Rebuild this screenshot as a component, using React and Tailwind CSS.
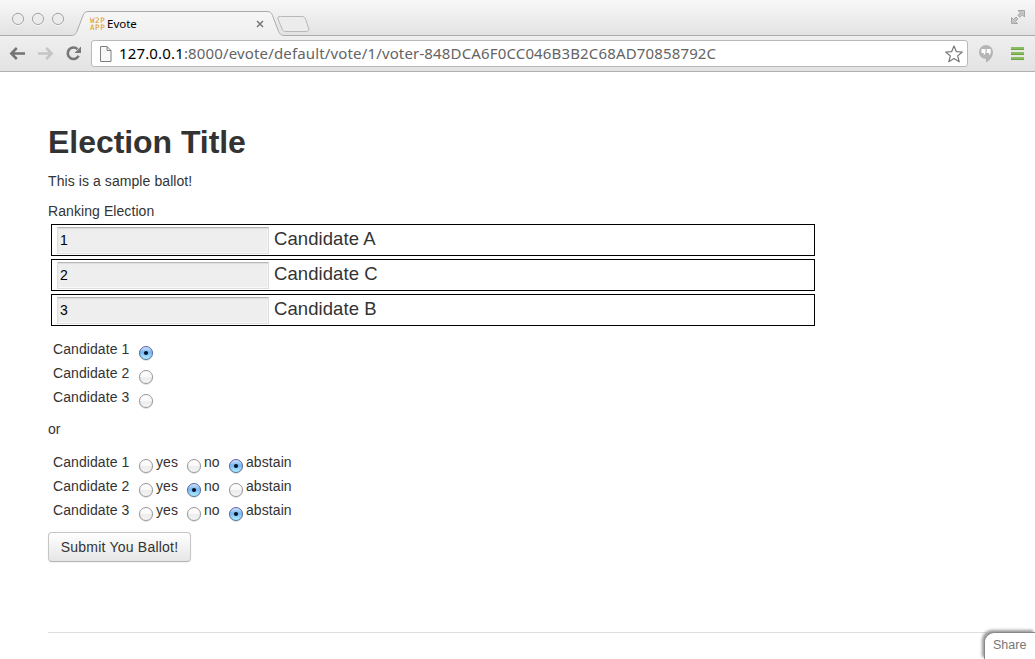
import React from "react";

function Radio({ checked }) {
  return (
    <svg className="mt-1.5 block h-4 w-4 shrink-0" viewBox="0 0 16 16">
      <defs>
        <linearGradient id="radioOn" x1="0" y1="0" x2="0" y2="1">
          <stop offset="0" stopColor="#d9e6f8" />
          <stop offset="0.45" stopColor="#78b7f3" />
          <stop offset="1" stopColor="#b4f2ff" />
        </linearGradient>
        <linearGradient id="radioOff" x1="0" y1="0" x2="0" y2="1">
          <stop offset="0" stopColor="#ffffff" />
          <stop offset="0.5" stopColor="#f8f8f8" />
          <stop offset="0.55" stopColor="#ebebeb" />
          <stop offset="1" stopColor="#f8f8f8" />
        </linearGradient>
        <linearGradient id="ringOn" x1="0" y1="0" x2="0" y2="1">
          <stop offset="0" stopColor="#6464b0" />
          <stop offset="1" stopColor="#53708f" />
        </linearGradient>
      </defs>
      <circle cx="8" cy="8.6" r="6.8" fill="none" stroke="#000" strokeOpacity="0.13" />
      <circle cx="8" cy="8" r="6.5" fill={checked ? "url(#radioOn)" : "url(#radioOff)"} stroke={checked ? "url(#ringOn)" : "#999"} />
      {checked && <circle cx="8" cy="8" r="2.1" fill="#071527" />}
    </svg>
  );
}

function TabStrip() {
  return (
    <div className="relative flex h-9 items-start bg-linear-to-b from-[#f8f8f8] to-[#e2e2e2]">
      <svg className="absolute inset-0 h-9 w-[1035px]" viewBox="0 0 1035 36">
        <defs>
          <linearGradient id="tabFill" x1="0" y1="0" x2="0" y2="1">
            <stop offset="0" stopColor="#f6f6f6" />
            <stop offset="1" stopColor="#efefef" />
          </linearGradient>
        </defs>
        <path d="M0 35.5H71C75 35.5 76 34 77.5 30L83 15.5C84 12.5 86 11.5 89 11.5H267C270 11.5 271.500 12.500 272.500 15.500L278 30C279.500 34 281 35.500 285 35.500H1035V37H0Z" fill="url(#tabFill)" stroke="#ababab" />
        <path d="M280.500 16.500H302C304 16.500 304.800 17.300 305.500 19L308.500 28C309.200 30.500 308.500 31.500 306 31.500H286C283.500 31.500 282.500 30.500 281.700 28L278 19C277.300 17 278 16.500 280.500 16.500Z" fill="#ececec" stroke="#b8b8b8" />
        <path d="M1011.500 17.500v6h6l-2-2 2.500-2.500-2-2-2.500 2.500zM1018 10.500h6.500V17l-2.200-2.200-2.500 2.500-2-2 2.500-2.500z" fill="#c4c4c4" stroke="#999" strokeWidth="0.8" />
        {[18, 38, 58].map((x) => (
          <g key={x}>
            <circle cx={x} cy="19.500" r="5.800" fill="none" stroke="#fff" />
            <circle cx={x} cy="18.900" r="5.600" fill="#ececec" stroke="#a3a3a3" />
          </g>
        ))}
      </svg>
      <div className="relative ml-[90px] mt-[17px] flex w-[174px] items-start">
        <div className="flex w-4 flex-col font-['DejaVu_Sans_Mono',monospace] text-[7.500px] leading-[7px] tracking-[0.6px] text-[#dc9a0c]">
          <span>W2P</span>
          <span>APP</span>
        </div>
        <span className="ml-[1px] font-['Noto_Sans',sans-serif] text-[11.500px] leading-[14px] text-black">Evote</span>
        <svg className="ml-auto mt-[3px] h-2 w-2" viewBox="0 0 8 8">
          <path d="M1 1l6 6M7 1L1 7" stroke="#777" strokeWidth="1.500" />
        </svg>
      </div>
    </div>
  );
}

function Toolbar() {
  return (
    <div className="flex h-9 items-start border-b border-[#b0b0b0] bg-linear-to-b from-[#efefef] to-[#e3e3e3] pt-[4px]">
      <svg className="h-[26px] w-[91px] shrink-0" viewBox="0 0 91 26" fill="none">
        <path d="M25 13.500H12M16.800 8L11.300 13.500L16.800 19" stroke="#747474" strokeWidth="2.500" />
        <path d="M38 13.500H51M46.200 8L51.700 13.500L46.200 19" stroke="#c5c5c5" strokeWidth="2.500" />
        <path d="M77.500 9.200A5.700 5.700 0 1 0 78.600 15.700" stroke="#777" strokeWidth="2.600" />
        <path d="M81 6.500V13H74.500Z" fill="#777" />
      </svg>
      <div className="flex h-[27px] w-[877px] shrink-0 items-center rounded-[3px] border border-[#b9b9b9] bg-white pl-[7px] pr-[3px]">
        <svg className="h-4 w-[13px] shrink-0" viewBox="0 0 13 16">
          <path d="M1.500 0.500H8L12 4.500V15.500H1.500Z" fill="#f7f7f7" stroke="#7f7f7f" />
          <path d="M8 0.500V4.500H12" fill="none" stroke="#7f7f7f" />
        </svg>
        <span className="mb-0.5 ml-[7px] whitespace-nowrap font-['Noto_Sans',sans-serif] text-[15px] leading-5 tracking-[0.150px] text-[#646464]"><span className="text-black">127.0.0.1</span>:8000/evote/default/vote/1/voter-848DCA6F0CC046B3B2C68AD70858792C</span>
        <svg className="ml-auto h-5 w-5 shrink-0" viewBox="0 0 20 20">
          <path d="M10 2L12.300 7.600L18.300 8L13.700 11.900L15.200 17.800L10 14.600L4.800 17.800L6.300 11.900L1.700 8L7.700 7.600Z" fill="#fff" stroke="#777" strokeWidth="1.200" strokeLinejoin="round" />
        </svg>
      </div>
      <svg className="h-[26px] w-[67px] shrink-0" viewBox="0 0 67 26">
        <path d="M18 5A7 7 0 0 0 18 19V22.500C22 20.500 25 16.500 25 12A7 7 0 0 0 18 5Z" fill="#b5b5b5" />
        <path d="M13.500 9H17.500V13L15.800 15.500V13H13.500ZM18.700 9H22.700V13L21 15.500V13H18.700Z" fill="#fff" />
        <path d="M43 8.500H56M43 13.500H56M43 18.500H56" stroke="#6da43f" strokeWidth="3" />
        <path d="M43 8H56M43 13H56M43 18H56" stroke="#8abd62" strokeWidth="2" />
      </svg>
    </div>
  );
}

const ranking = ["Candidate A", "Candidate C", "Candidate B"];

const ballots = [
  { name: "Candidate 1", choice: "abstain" },
  { name: "Candidate 2", choice: "no" },
  { name: "Candidate 3", choice: "abstain" },
];

export default function App() {
  return (
    <div className="relative flex h-[659px] w-[1035px] flex-col overflow-hidden bg-white font-['Liberation_Sans',sans-serif] text-sm text-[#333]">
      <TabStrip />
      <Toolbar />
      <main className="flex flex-col items-start pl-12 pt-[50px] tracking-[0.080px]">
        <h1 className="h-10 text-[32px] font-bold leading-10 tracking-[-0.050px]">Election Title</h1>
        <p className="mt-[9px] leading-5">This is a sample ballot!</p>
        <p className="mt-2.5 leading-5">Ranking Election</p>
        <div className="ml-[3px] mt-[3px] flex w-[764px] flex-col gap-[3px]">
          {ranking.map((name, i) => (
            <div key={name} className="flex h-8 border border-black pl-[5px] pt-[2px]">
              <div className="h-[27px] w-[212px] border border-[#dedede] border-t-[#b5b5b5] bg-[#eee] pl-0.5 leading-6 text-black shadow-[inset_0_1px_1px_#ddd,inset_-1px_-1px_0_#f8f8f8]">{i + 1}</div>
              <span className="ml-[5px] text-[18.500px] leading-6">{name}</span>
            </div>
          ))}
        </div>
        <div className="mt-[13px] flex flex-col pl-[5px]">
          {["Candidate 1", "Candidate 2", "Candidate 3"].map((name, i) => (
            <div key={name} className="flex h-6">
              <span className="w-[85px] leading-5">{name}</span>
              <Radio checked={i === 0} />
            </div>
          ))}
        </div>
        <p className="mt-2 leading-5">or</p>
        <div className="mt-[13px] flex flex-col pl-[5px]">
          {ballots.map(({ name, choice }) => (
            <div key={name} className="flex h-6 leading-5">
              <span className="w-[85px]">{name}</span>
              <Radio checked={choice === "yes"} />
              <span className="ml-[2px] w-[30px]">yes</span>
              <Radio checked={choice === "no"} />
              <span className="ml-[2px] w-6">no</span>
              <Radio checked={choice === "abstain"} />
              <span className="ml-[2px]">abstain</span>
            </div>
          ))}
        </div>
        <button className="mt-2 h-[30px] w-[143px] rounded border border-[#c5c5c5] border-b-[#b3b3b3] bg-linear-to-b from-white to-[#e6e6e6] text-center leading-5 tracking-[0.220px] shadow-[0_1px_2px_rgba(0,0,0,0.05)]">Submit You Ballot!</button>
        <div className="mt-[70px] h-px w-[939px] bg-[#ddd]" />
      </main>
      <div className="absolute bottom-0 right-0 h-[27px] w-[51px] rounded-tl-[10px] border-l border-t border-[#888] bg-white pl-2 pt-[3px] text-[12.500px] leading-[18px] text-[#777] shadow-[-2px_-2px_3px_0px_#999]">Share</div>
    </div>
  );
}
